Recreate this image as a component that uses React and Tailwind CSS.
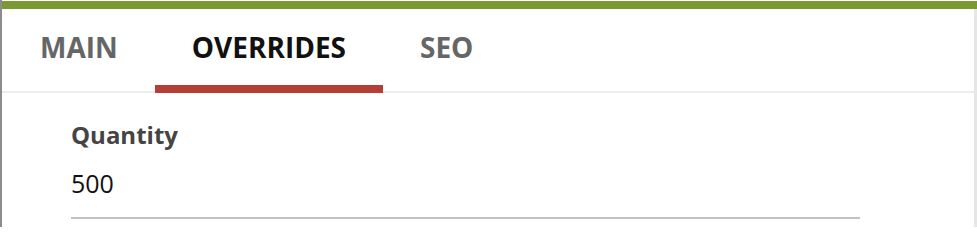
const TABS = ["MAIN", "OVERRIDES", "SEO"];

export default function App() {
  const active = "OVERRIDES";

  return (
    <div
      className="flex h-[227px] w-[977px] overflow-hidden bg-white"
      style={{ fontFamily: '"Open Sans", sans-serif' }}
    >
      <div className="w-[2px] shrink-0 bg-[#8c8c8c]" />
      <div className="flex min-w-0 flex-1 flex-col">
        <div className="mt-px h-2 shrink-0 bg-[#7b9a33]" />
        <div className="flex min-h-0 flex-1">
          <div className="flex min-w-0 flex-1 flex-col">
            {/* tabs */}
            <div className="flex h-[84px] shrink-0 border-b-2 border-[#ececec] pl-px">
              {TABS.map((tab) => (
                <div
                  key={tab}
                  className={`-mb-[2px] flex items-center border-b-8 px-[37px] text-[28px] font-bold ${
                    tab === active
                      ? "border-[#b53f35] text-[#111111]"
                      : "border-transparent text-[#666666]"
                  }`}
                >
                  {tab}
                </div>
              ))}
            </div>

            {/* form */}
            <div className="ml-[69px] w-[789px] pt-[26px]">
              <div className="text-[24px] font-bold leading-[32px] text-[#444444]">
                Quantity
              </div>
              <div className="mt-[16px] border-b-2 border-[#c2c2c2] pb-[18px] text-[25px] leading-[32px] text-[#111111]">
                500
              </div>
            </div>
          </div>
          <div className="w-[3px] shrink-0 bg-[#e6e6e6]" />
        </div>
      </div>
    </div>
  );
}
